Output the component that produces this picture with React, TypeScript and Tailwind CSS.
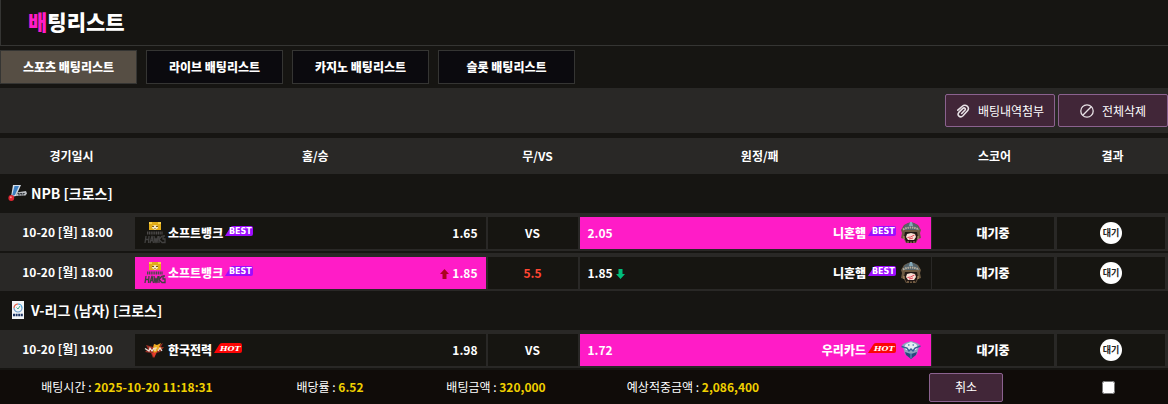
import { Fragment, type ReactNode } from 'react'

type Tag = 'BEST' | 'HOT'
type Logo = 'hawks' | 'fighters' | 'kepco' | 'woori'

interface Side {
  name: string
  logo: Logo
  tag: Tag
  odds: string
  trend?: 'up' | 'down'
  picked?: boolean
}

interface Game {
  time: string
  home: Side
  away: Side
  line: string
  handicap?: boolean
}

interface League {
  title: string
  icon: ReactNode
  games: Game[]
}

const TABS = ['스포츠 배팅리스트', '라이브 배팅리스트', '카지노 배팅리스트', '슬롯 배팅리스트']

function NpbIcon() {
  return (
    <svg width="20" height="18" viewBox="0 0 20 18" aria-hidden="true">
      <path d="M5 1h8L8 12l-5 1z" fill="#d5dde6" />
      <path d="M6.500 2H11L7 11l-3 1z" fill="#3c7ec0" />
      <path d="M8.500 8.500 18 7l1 2.500-1.500 2L8 12z" fill="#b9bcc0" />
      <path d="M9.500 9.500h7.500M10 10.900h6" stroke="#34383e" strokeWidth="1" strokeDasharray="2 .6" />
      <circle cx="3.300" cy="14" r="2.900" fill="#dd2631" />
      <circle cx="2.800" cy="13.300" r="1" fill="#ff8d8d" />
    </svg>
  )
}

function VLeagueIcon() {
  return (
    <svg width="20" height="18" viewBox="0 0 20 18" aria-hidden="true">
      <path d="M4 0h12v18H4z" fill="#f3f6f8" />
      <path d="M6 7a4 4 0 0 1 4-4" stroke="#e4573d" strokeWidth="1.200" fill="none" />
      <path d="M10 3a4 4 0 0 1 4 4" stroke="#3f9ad8" strokeWidth="1.200" fill="none" />
      <path d="M14 7a4 4 0 0 1-8 0" stroke="#6d9cc9" strokeWidth="1.200" fill="none" />
      <path d="M8.500 6.500 10 8l2-3" stroke="#48b08c" strokeWidth="1" fill="none" />
      <path d="M5 14h10" stroke="#1d3564" strokeWidth="2.400" strokeDasharray="2 .6" />
    </svg>
  )
}

function TeamLogo({ logo }: { logo: Logo }) {
  if (logo === 'hawks') {
    return (
      <svg width="22" height="22" viewBox="0 0 22 22" aria-hidden="true">
        <path d="M5 0h12v8H5z" fill="#e2ad17" />
        <path d="M5 0h3v2H5zM14 0h3v2h-3z" fill="#f9d34b" />
        <path d="m8 4 3-1 3 1v2l-3 2-3-2z" fill="#f4e9c4" />
        <path d="M8 4h2v1H8zM12 4h2v1h-2zM10.500 6h1v1h-1z" fill="#7c5513" />
        <path d="M3 11h16" stroke="#4c4a49" strokeWidth="3" strokeDasharray="1.200 .6" />
        <path
          d="M1 21 2 14M4.500 21l.5-7M1.500 17.500h3M6 21l2-7 1.500 7M6.500 18.500h2.500M10 14l1 7 1-5 1 5 1-7M15 14v7M18 14l-3 3.500 3.500 3.500M21 14h-2v3h2v3.500h-2.500"
          stroke="#424140"
          strokeWidth="1.300"
          fill="none"
        />
      </svg>
    )
  }
  if (logo === 'fighters') {
    return (
      <svg width="22" height="22" viewBox="0 0 22 22" aria-hidden="true">
        <path d="M1 8 4 3l4-2 3-1 3 1 4 2 3 5-1 3 1 5-3 1-2 4H6l-2-4-3-1 1-5z" fill="#6c5941" />
        <path d="M5 3q6-5 12 0l3 5H2z" fill="#55646c" />
        <path d="M10 0h2l1 4H9z" fill="#84a8b8" />
        <path d="M3 7.500q8-4 16 0" stroke="#b8ae9c" strokeWidth="2" strokeDasharray="1.500 .8" fill="none" />
        <path d="M5 10h12l1 5-3 6H7l-3-6z" fill="#211814" />
        <path d="m7 12 4-1 4 1 1 3-2 3h-6l-2-3z" fill="#f7ded3" />
        <path d="m7.500 15.500 3-.5 4-2M9 17l4-1" stroke="#e4475b" strokeWidth="1" fill="none" />
        <path d="M4 14v3M18 14v3M8 19v2M14 19v2M11 19.500V21" stroke="#bd9b6d" strokeWidth="1" fill="none" />
      </svg>
    )
  }
  if (logo === 'kepco') {
    return (
      <svg width="22" height="22" viewBox="0 0 22 22" aria-hidden="true">
        <path d="m2 6 7 2 1-3 4 2 5-3-2 4h3l-4 5-4 1-3 5-2-5-6-1 3-3z" fill="#9b2f24" />
        <path d="m10 5 3 1 4-2-2 4 3 1-4 2-4 5-1-6z" fill="#edae20" />
        <path d="M1 9.500 5 12l1-3 2 3 2-3M11 12V9h2M14 12l2-3 2 3" stroke="#ece3dc" strokeWidth="1.200" fill="none" />
        <path d="m8 14 5-1-3 6z" fill="#e23b2d" />
      </svg>
    )
  }
  return (
    <svg width="22" height="22" viewBox="0 0 22 22" aria-hidden="true">
      <path d="m5 4 6-2 6 2 3 2-2 5-1 4-6 5-6-5-1-4-2-5z" fill="#8ba6bf" />
      <path d="m6 5 5-2 5 2 2 3-2 3H6L4 8z" fill="#e4edf2" />
      <path d="M1.500 7.500 7 9l2 3 2-2 2 2 2-3 5.500-2" stroke="#345f95" strokeWidth="1.400" fill="none" />
      <path d="m5 13 6 2 6-2-1 3-5 4-5-4z" fill="#27487d" />
      <path d="M8 6h1.500M12.500 6H14M11 14v5" stroke="#5a88b6" strokeWidth="1.300" />
    </svg>
  )
}

function TagBadge({ tag }: { tag: Tag }) {
  const hot = tag === 'HOT'
  return (
    <svg width="28" height="12" viewBox="0 0 28 12" className="mb-1">
      <path d="M0 11 5 3Q6 1 8 1h18q2 0 2 2v6q0 2-2 2z" fill={hot ? '#fb0505' : '#9d0cff'} />
      {hot ? (
        <text x="6" y="9" fontSize="8" fontWeight="700" fontStyle="italic" fontFamily="DejaVu Serif, serif" fill="#fff">
          HOT
        </text>
      ) : (
        <text x="4" y="9" fontSize="8" fontWeight="700" fontFamily="DejaVu Sans, sans-serif" fill="#fff">
          BEST
        </text>
      )}
    </svg>
  )
}

function TrendArrow({ trend }: { trend: 'up' | 'down' }) {
  return (
    <svg width="9" height="10" viewBox="0 0 9 10" className="mt-0.5" aria-hidden="true">
      {trend === 'up' ? (
        <path d="M4.500 0 9 5H6.500v5h-4V5H0z" fill="#ac0320" />
      ) : (
        <path d="M4.500 10 9 5H6.500V0h-4v5H0z" fill="#00bd7a" />
      )}
    </svg>
  )
}

function OddsCell({ side, away }: { side: Side; away?: boolean }) {
  return (
    <div
      className={`flex h-8 items-center justify-between px-2 ${away ? 'flex-row-reverse' : ''} ${
        side.picked ? 'bg-[#ff1cc7]' : 'bg-[#161511]'
      }`}
    >
      <div className={`flex items-center ${away ? 'flex-row-reverse gap-1 pr-px' : 'gap-0.5 pl-px'}`}>
        <TeamLogo logo={side.logo} />
        <div className="flex items-center gap-0.5">
          <span className="font-black">{side.name}</span>
          <TagBadge tag={side.tag} />
        </div>
      </div>
      <div className={`flex items-center gap-[3px] ${away ? 'flex-row-reverse' : ''}`}>
        {side.trend && <TrendArrow trend={side.trend} />}
        <span>{side.odds}</span>
      </div>
    </div>
  )
}

const hawks = { name: '소프트뱅크', logo: 'hawks', tag: 'BEST' } as const
const fighters = { name: '니혼햄', logo: 'fighters', tag: 'BEST' } as const

const LEAGUES: League[] = [
  {
    title: 'NPB [크로스]',
    icon: <NpbIcon />,
    games: [
      {
        time: '10-20 [월] 18:00',
        home: { ...hawks, odds: '1.65' },
        away: { ...fighters, odds: '2.05', picked: true },
        line: 'VS',
      },
      {
        time: '10-20 [월] 18:00',
        home: { ...hawks, odds: '1.85', trend: 'up', picked: true },
        away: { ...fighters, odds: '1.85', trend: 'down' },
        line: '5.5',
        handicap: true,
      },
    ],
  },
  {
    title: 'V-리그 (남자) [크로스]',
    icon: <VLeagueIcon />,
    games: [
      {
        time: '10-20 [월] 19:00',
        home: { name: '한국전력', logo: 'kepco', tag: 'HOT', odds: '1.98' },
        away: { name: '우리카드', logo: 'woori', tag: 'HOT', odds: '1.72', picked: true },
        line: 'VS',
      },
    ],
  },
]

const SUMMARY = [
  { label: '배팅시간', value: '2025-10-20 11:18:31' },
  { label: '배당률', value: '6.52' },
  { label: '배팅금액', value: '320,000' },
  { label: '예상적중금액', value: '2,086,400' },
]

const actionBtn = 'flex items-center justify-center rounded-xs border border-[#8b628f] bg-[#412638] text-white'

export default function App() {
  return (
    <div className="min-h-screen bg-[#161512] font-['Noto_Sans_CJK_KR',sans-serif] text-[12px] leading-4 text-white">
      <header className="border-b border-l border-[#353533] px-[27px] pb-2.5 pt-[7px]">
        <h1 className="text-[21px] font-black leading-7">
          <span className="text-[#ff1cc7]">배</span>팅리스트
        </h1>
      </header>

      {/* Tabs */}
      <nav className="flex gap-[9px] py-1">
        {TABS.map((tab, i) => (
          <button
            key={tab}
            type="button"
            className={`h-[34px] w-[137px] border border-[#353533] font-black ${i === 0 ? 'bg-[#564e44]' : 'bg-[#0b0a0e]'}`}
          >
            {tab}
          </button>
        ))}
      </nav>

      {/* Toolbar */}
      <div className="flex justify-end gap-[3px] bg-[#292826] py-1.5">
        <button type="button" className={`${actionBtn} h-[33px] w-[110px] gap-2`}>
          <svg width="14" height="14" viewBox="0 0 14 14" fill="none" stroke="#e8e2e6" strokeWidth="1.600" strokeLinecap="round" aria-hidden="true">
            <path d="m1.800 6.200 4.200-3.700c3.500-3 8.500.5 5.500 4.300L7 11.700c-2.800 2.800-6.600-.5-4.200-3.300l4-4c1.700-1.300 3.300.4 2 1.900L5.700 9.500" />
          </svg>
          배팅내역첨부
        </button>
        <button type="button" className={`${actionBtn} h-[33px] w-[110px] gap-2`}>
          <svg width="14" height="14" viewBox="0 0 14 14" fill="none" stroke="#e8e2e6" strokeWidth="1.300" aria-hidden="true">
            <circle cx="7" cy="7" r="6.200" />
            <path d="m2.800 11.200 8.400-8.400" />
          </svg>
          전체삭제
        </button>
      </div>

      <table className="mt-[5px] w-full table-fixed border-collapse font-bold">
        <colgroup>
          <col className="w-[135px]" />
          <col />
          <col className="w-[92px]" />
          <col />
          <col className="w-[125px]" />
          <col className="w-[111px]" />
        </colgroup>
        <thead>
          <tr className="h-9 bg-[#292826]">
            <th className="pl-2">경기일시</th>
            <th className="pl-2">홈/승</th>
            <th className="pl-2">무/VS</th>
            <th className="pl-2">원정/패</th>
            <th>스코어</th>
            <th>결과</th>
          </tr>
        </thead>
        <tbody>
          {LEAGUES.map(league => (
            <Fragment key={league.title}>
              <tr>
                <td colSpan={6} className="h-[37px] p-0">
                  <div className="flex items-center gap-[3px] pl-2 text-[14px]">
                    {league.icon}
                    {league.title}
                  </div>
                </td>
              </tr>
              {league.games.map((game, i) => (
                <Fragment key={i}>
                  <tr className="h-0.5" aria-hidden="true">
                    <td colSpan={6} className="p-0" />
                  </tr>
                  <tr className="bg-[#292826] text-center">
                    <td className="p-0">{game.time}</td>
                    <td className="pb-0.5 pr-0.5 pt-1">
                      <OddsCell side={game.home} />
                    </td>
                    <td className="pb-0.5 pr-0.5 pt-1">
                      <div className={`flex h-8 items-center justify-center bg-[#161511] ${game.handicap ? 'text-[#ff4632]' : ''}`}>
                        {game.line}
                      </div>
                    </td>
                    <td className="pb-0.5 pr-px pt-1">
                      <OddsCell side={game.away} away />
                    </td>
                    <td className="pb-0.5 pr-[3px] pt-1">
                      <div className="flex h-8 items-center justify-center bg-[#161511] font-black">대기중</div>
                    </td>
                    <td className="pb-0.5 pr-[3px] pt-1">
                      <div className="flex h-8 items-center justify-center bg-[#161511]">
                        <span className="flex size-[22px] items-center justify-center rounded-full bg-white text-[9px] font-bold text-[#222]">
                          대기
                        </span>
                      </div>
                    </td>
                  </tr>
                </Fragment>
              ))}
            </Fragment>
          ))}
        </tbody>
      </table>

      {/* Slip summary */}
      <div className="mt-0.5 grid h-[34px] grid-cols-[254fr_152fr_180fr_214fr_76fr_180fr_112fr] items-center justify-items-center bg-[#100c09]">
        {SUMMARY.map(item => (
          <span key={item.label} className="whitespace-nowrap">
            {item.label} : <b className="text-[#f0d000]">{item.value}</b>
          </span>
        ))}
        <span />
        <button type="button" className={`${actionBtn} h-[29px] w-[74px]`}>
          취소
        </button>
        <input type="checkbox" aria-label="선택" className="mr-2 size-[13px]" />
      </div>
    </div>
  )
}
